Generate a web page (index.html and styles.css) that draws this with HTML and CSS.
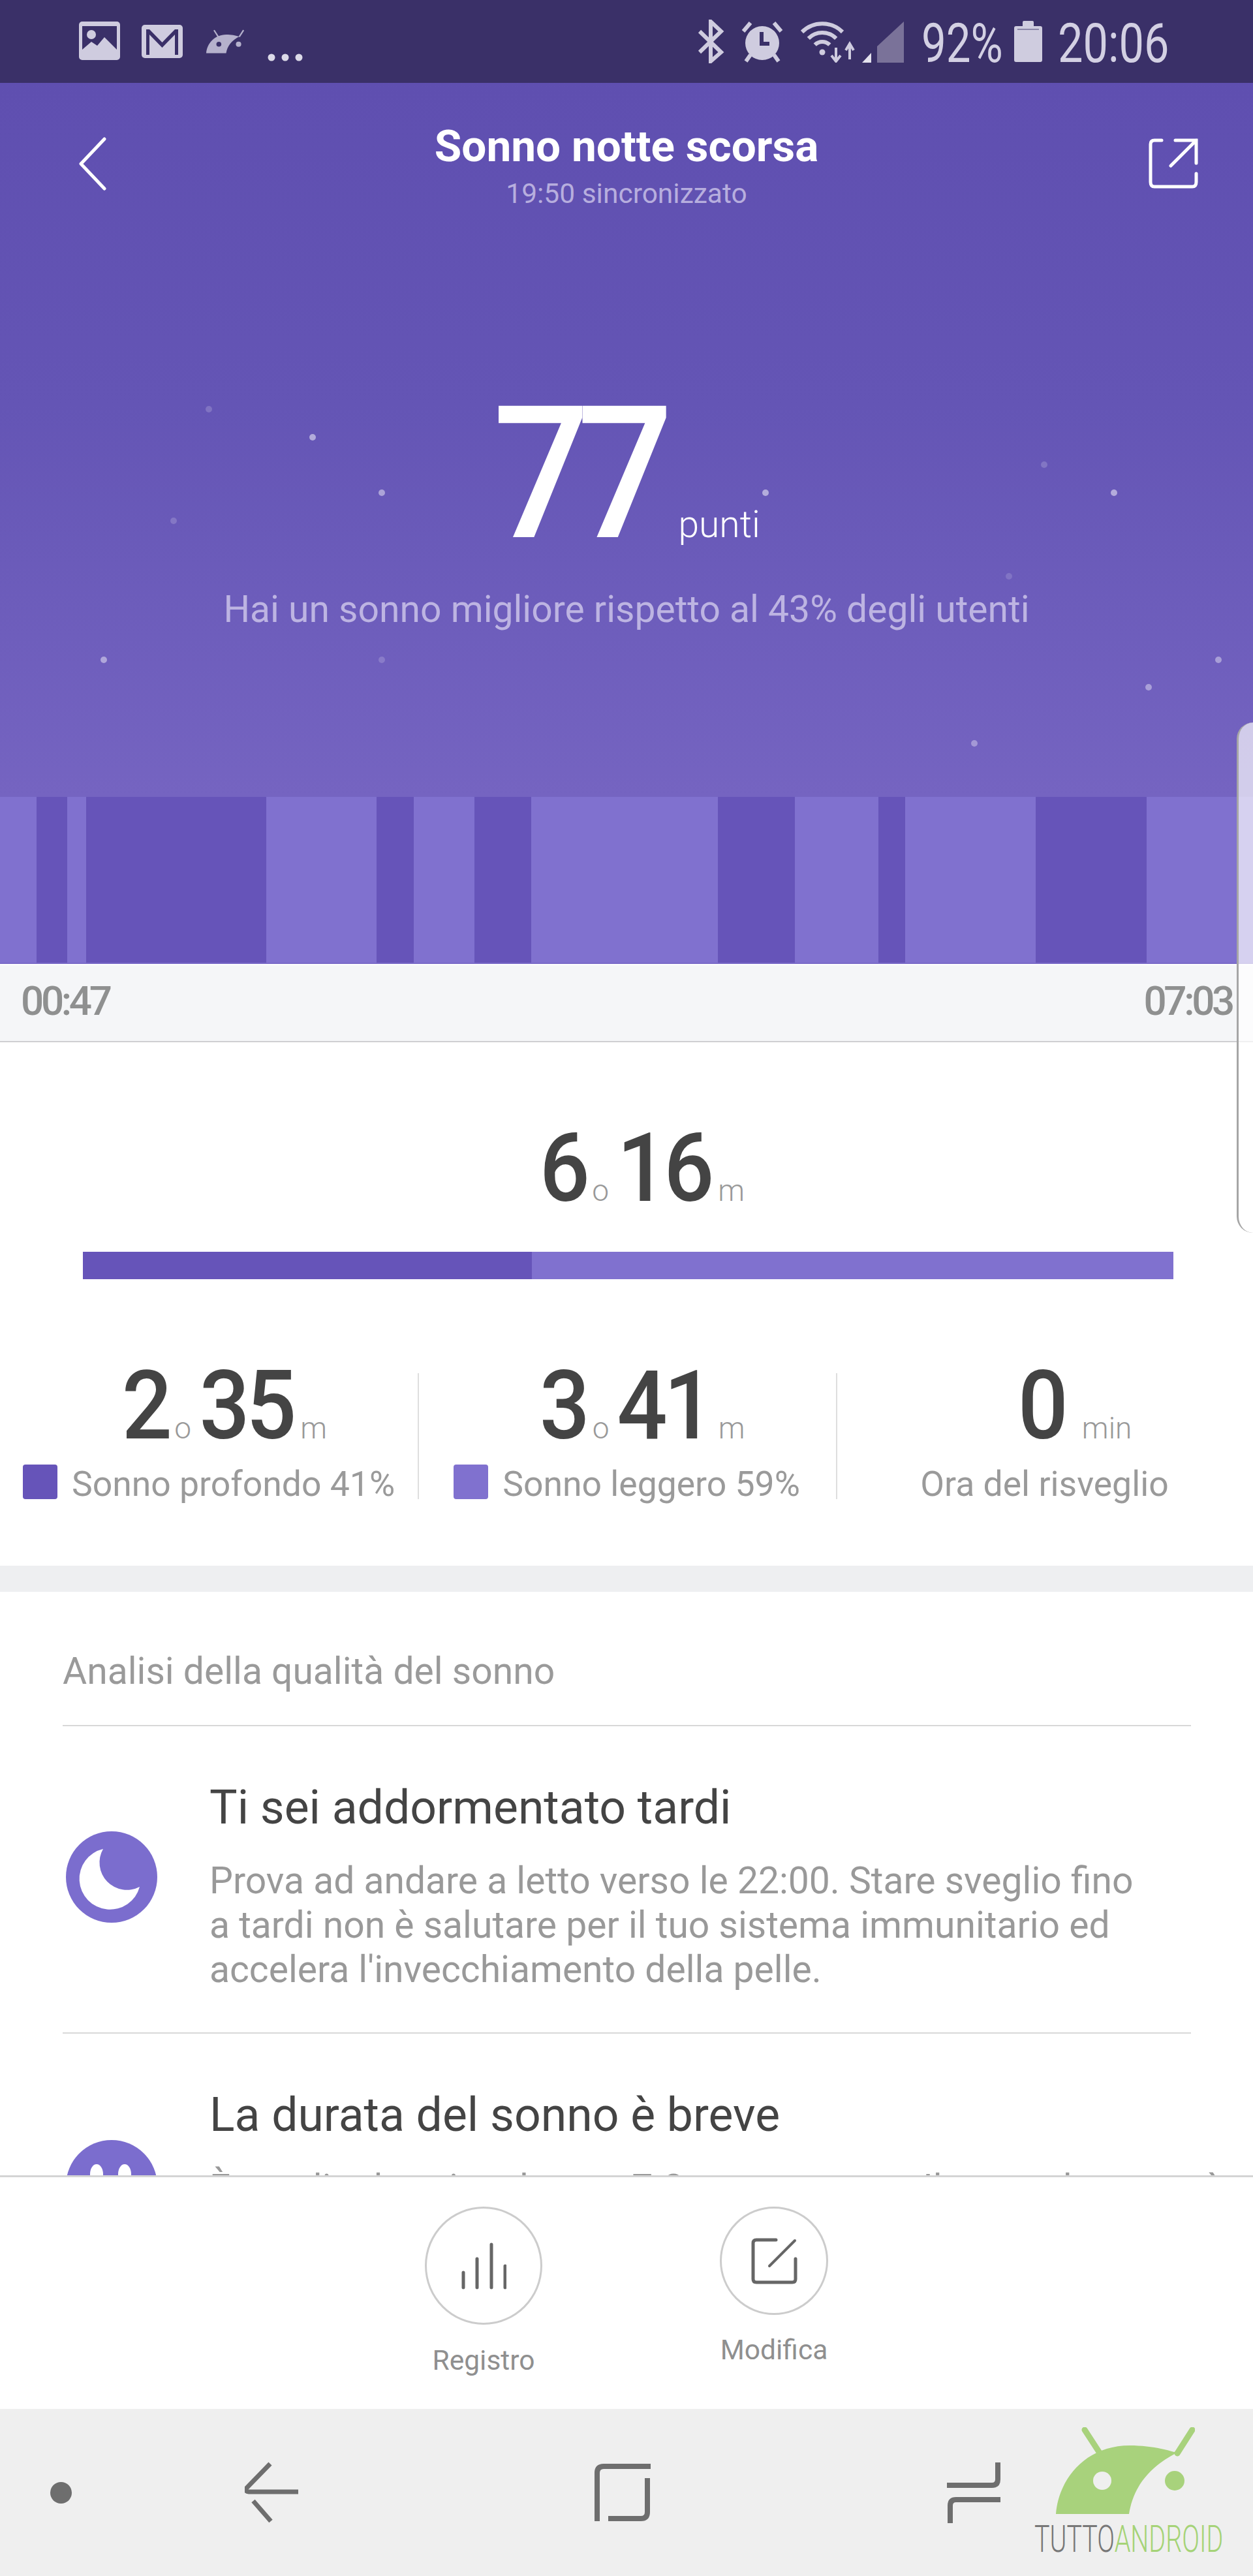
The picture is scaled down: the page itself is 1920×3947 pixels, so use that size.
FILE: index.html
```html
<!DOCTYPE html>
<html lang="it">
<head>
<meta charset="utf-8">
<title>Sonno notte scorsa</title>
<link rel="stylesheet" href="styles.css">
</head>
<body>
<div class="page">
  <div class="status">
    <div class="status-left">
      <svg class="si-image" width="63" height="59" viewBox="0 0 63 59"><rect width="63" height="59" rx="5" fill="#cfccdf"/><rect x="5" y="7" width="53" height="45" fill="#3a3068"/><ellipse cx="19" cy="20" rx="7" ry="7" fill="#cfccdf"/><path d="M5 43 19 31 28 37 39 24 58 43V54H5Z" fill="#cfccdf"/></svg>
      <svg class="si-mail" width="63" height="51" viewBox="0 0 63 51"><rect width="63" height="51" rx="5" fill="#cfccdf"/><path d="M7 7H12L31.500 27 51 7H56V46H51V15L31.500 35 12 15V46H7Z" fill="#3a3068"/></svg>
      <svg class="si-droid" width="58" height="37" viewBox="0 0 213 133"><path d="M0 133C4 80 45 28 113 28 140 28 165 33 181 38L192 36C140 60 118 95 112 133Z" fill="#b5b1cc"/><path d="M44 3 70 44M210 3 186 40" stroke="#b5b1cc" stroke-width="8" fill="none"/><circle cx="71" cy="82" r="14" fill="#3a3068"/><circle cx="182" cy="82" r="15" fill="#b5b1cc"/></svg>
      <svg class="si-dots" width="54" height="12" viewBox="0 0 54 12"><circle cx="6" cy="6" r="5.500" fill="#dcdae8"/><circle cx="27" cy="6" r="5.500" fill="#dcdae8"/><circle cx="48" cy="6" r="5.500" fill="#dcdae8"/></svg>
    </div>
    <div class="status-right">
      <svg class="si-bt" width="42" height="67" viewBox="0 0 42 67"><path d="M4 18 37 50 21 64V3L37 18 4 50" fill="none" stroke="#cfccdf" stroke-width="6"/></svg>
      <svg class="si-alarm" width="64" height="64" viewBox="0 0 64 64"><circle cx="32" cy="34" r="26" fill="#cfccdf"/><path d="M31 17V35H43" fill="none" stroke="#3a3068" stroke-width="6"/><path d="M3 16 14 3M61 16 50 3M7 62 14 52M57 62 50 52" stroke="#cfccdf" stroke-width="6" fill="none"/></svg>
      <svg class="si-wifi" width="88" height="65" viewBox="0 0 88 65"><g fill="none" stroke="#cfccdf" stroke-width="6"><path d="M5 18A44 44 0 0 1 67 18"/><path d="M14.800 27.800A30 30 0 0 1 57.200 27.800"/><path d="M24.700 37.700A16 16 0 0 1 47.300 37.700"/></g><circle cx="36" cy="49" r="4.500" fill="#cfccdf"/><path d="M57 42V62M50 54 57 63 64 54M78 60V38M72 46 78 36 84 46" fill="none" stroke="#cfccdf" stroke-width="4"/></svg>
      <svg class="si-signal" width="64" height="63" viewBox="0 0 64 63"><path d="M23 63V38L64 0V63Z" fill="#7a7299"/><path d="M0 63H14V48Z" fill="#e4e2ee"/></svg>
      <span class="stext pct">92%</span>
      <svg class="si-batt" width="43" height="63" viewBox="0 0 43 63"><path d="M3 8H13V2Q13 0 15 0H28Q30 0 30 2V8H40Q43 8 43 11V60Q43 63 40 63H3Q0 63 0 60V11Q0 8 3 8Z" fill="#cfccdf"/><rect x="5" y="12" width="33" height="2" fill="#8a85a8"/></svg>
      <span class="stext clock">20:06</span>
    </div>
  </div>

  <section class="hero">
    <svg class="stars" width="1920" height="1094" viewBox="0 127 1920 1094">
      <g fill="#fff">
        <circle cx="320" cy="627" r="5" opacity=".18"/><circle cx="479" cy="670" r="5" opacity=".5"/><circle cx="585" cy="755" r="5" opacity=".45"/><circle cx="266" cy="798" r="5" opacity=".18"/><circle cx="1173" cy="755" r="5" opacity=".5"/><circle cx="1600" cy="712" r="5" opacity=".18"/><circle cx="1707" cy="755" r="5" opacity=".5"/><circle cx="1546" cy="883" r="5" opacity=".15"/><circle cx="159" cy="1011" r="5" opacity=".45"/><circle cx="585" cy="1011" r="5" opacity=".18"/><circle cx="1867" cy="1011" r="5" opacity=".4"/><circle cx="1760" cy="1053" r="5" opacity=".4"/><circle cx="1493" cy="1139" r="5" opacity=".35"/>
      </g>
    </svg>
    <header class="topbar">
      <div class="tb-side">
        <svg class="back" width="44" height="82" viewBox="0 0 44 82"><path d="M40 3 4 41 40 79" fill="none" stroke="#fff" stroke-width="5" stroke-linecap="round" stroke-linejoin="round"/></svg>
      </div>
      <div class="tb-title">
        <h1 class="title">Sonno notte scorsa</h1>
        <p class="sync">19:50 sincronizzato</p>
      </div>
      <div class="tb-side tb-right">
        <svg class="share" width="76" height="77" viewBox="0 0 76 77"><path d="M20 3H9Q3 3 3 9V67Q3 74 9 74H67Q73 74 73 67V54" fill="none" stroke="#fff" stroke-width="5" stroke-linecap="round"/><path d="M41 3H73V38M73 3 34 42" fill="none" stroke="#fff" stroke-width="5" stroke-linecap="round"/></svg>
      </div>
    </header>
    <div class="score"><span class="score-num">77</span><span class="score-unit">punti</span></div>
    <p class="score-note">Hai un sonno migliore rispetto al 43% degli utenti</p>
  </section>

  <div class="chart">
    <i class="seg l" style="width:56px"></i><i class="seg d" style="width:47px"></i><i class="seg l" style="width:29px"></i><i class="seg d" style="width:276px"></i><i class="seg l" style="width:169px"></i><i class="seg d" style="width:57px"></i><i class="seg l" style="width:93px"></i><i class="seg d" style="width:87px"></i><i class="seg l" style="width:286px"></i><i class="seg d" style="width:118px"></i><i class="seg l" style="width:128px"></i><i class="seg d" style="width:41px"></i><i class="seg l" style="width:200px"></i><i class="seg d" style="width:170px"></i><i class="seg l" style="width:163px"></i>
  </div>
  <div class="times"><span>00:47</span><span>07:03</span></div>

  <section class="summary">
    <div class="num total"><b>6</b><small>o</small><b>16</b><small>m</small></div>
    <div class="ratio"><i class="ratio-deep" style="width:688px"></i><i class="ratio-light"></i></div>
    <div class="stats">
      <div class="stat">
        <div class="num"><b>2</b><small>o</small><b>35</b><small>m</small></div>
        <div class="stat-label"><i class="swatch deep"></i><span>Sonno profondo 41%</span></div>
      </div>
      <div class="stat stat-div">
        <div class="num"><b>3</b><small>o</small><b>41</b><small>m</small></div>
        <div class="stat-label"><i class="swatch light"></i><span>Sonno leggero 59%</span></div>
      </div>
      <div class="stat stat-div">
        <div class="num num-wake"><b>0</b><small class="min">min</small></div>
        <div class="stat-label"><span>Ora del risveglio</span></div>
      </div>
    </div>
  </section>

  <div class="band"></div>

  <section class="analysis">
    <h2 class="an-head">Analisi della qualità del sonno</h2>
    <article class="item">
      <svg class="item-icon" width="140" height="140" viewBox="0 0 140 140"><circle cx="70" cy="70" r="70" fill="#7b6dce"/><path d="M57 27A47 47 0 1 0 113 85A42 42 0 0 1 57 27Z" fill="#fff"/></svg>
      <div class="item-body">
        <h3 class="item-title">Ti sei addormentato tardi</h3>
        <p class="item-desc">Prova ad andare a letto verso le 22:00. Stare sveglio fino<br>a tardi non è salutare per il tuo sistema immunitario ed<br>accelera l'invecchiamento della pelle.</p>
      </div>
    </article>
    <article class="item item-second">
      <svg class="item-icon" width="140" height="140" viewBox="0 0 140 140"><circle cx="70" cy="70" r="70" fill="#7b6dce"/><ellipse cx="47" cy="52" rx="10" ry="15" fill="#fff"/><ellipse cx="90" cy="52" rx="10" ry="15" fill="#fff"/></svg>
      <div class="item-body">
        <h3 class="item-title">La durata del sonno è breve</h3>
        <p class="item-desc">È meglio dormire almeno 7-8 ore per notte. Il sonno breve può</p>
      </div>
    </article>
  </section>

  <div class="actions">
    <div class="action">
      <div class="ring ring-lg">
        <svg width="70" height="72" viewBox="0 0 70 72"><path d="M4 46V69M25 25V69M47 3V69M68 36V69" fill="none" stroke="#666" stroke-width="5" stroke-linecap="round"/></svg>
      </div>
      <span class="action-label label-lg">Registro</span>
    </div>
    <div class="action">
      <div class="ring ring-sm">
        <svg width="71" height="71" viewBox="0 0 71 71"><path d="M38 3H8Q3 3 3 8V63Q3 68 8 68H63Q68 68 68 63V32" fill="none" stroke="#666" stroke-width="5" stroke-linecap="round"/><path d="M67 4 28 43" fill="none" stroke="#666" stroke-width="4" stroke-linecap="round"/></svg>
      </div>
      <span class="action-label label-sm">Modifica</span>
    </div>
  </div>

  <nav class="nav">
    <i class="nav-dot"></i>
    <svg class="nav-back" width="84" height="94" viewBox="0 0 84 94"><path d="M39 3 3 40Q0 46 6 46H82" fill="none" stroke="#6e6e6e" stroke-width="7"/><path d="M13 60 40 91" fill="none" stroke="#6e6e6e" stroke-width="7"/></svg>
    <svg class="nav-recent" width="86" height="88" viewBox="0 0 86 88"><path d="M4 88V14Q4 4 14 4H86" fill="none" stroke="#6e6e6e" stroke-width="8"/><path d="M81 22V74Q81 84 71 84H21" fill="none" stroke="#6e6e6e" stroke-width="8"/></svg>
    <svg class="nav-switch" width="82" height="94" viewBox="0 0 82 94"><path d="M78 0V26Q78 35 69 35H0" fill="none" stroke="#6e6e6e" stroke-width="8"/><path d="M82 57H14Q5 57 5 66V93" fill="none" stroke="#6e6e6e" stroke-width="8"/></svg>
    <div class="logo">
      <svg class="logo-mark" width="213" height="133" viewBox="0 0 213 133"><path d="M0 133C4 80 45 28 113 28 140 28 165 33 181 38L192 36C140 60 118 95 112 133Z" fill="#a8d27c"/><path d="M44 4 70 44M209 4 186 40" stroke="#a8d27c" stroke-width="9" stroke-linecap="round" fill="none"/><circle cx="71" cy="82" r="14" fill="#efefef"/><circle cx="182" cy="82" r="15" fill="#a8d27c"/></svg>
      <div class="logo-text"><span class="logo-a">TUTTO</span><span class="logo-b">ANDROID</span></div>
    </div>
  </nav>

  <div class="edge"></div>
</div>
</body>
</html>
```
FILE: styles.css
```css
* { box-sizing: border-box; }
html, body { margin: 0; padding: 0; }
body { font-family: Roboto, "Liberation Sans", sans-serif; background: #fff; }
i { display: block; font-style: normal; }
h1, h2, h3, p { margin: 0; font-weight: 400; }

.page {
  position: relative;
  width: 1920px;
  height: 3947px;
  overflow: hidden;
  display: flex;
  flex-direction: column;
}

/* status bar */
.status {
  flex: none;
  height: 127px;
  background: #3a3068;
  display: flex;
  justify-content: space-between;
  padding: 0 128px 0 121px;
}
.status-left { display: flex; align-items: flex-start; }
.si-image { margin-top: 33px; }
.si-mail { margin: 38px 0 0 33px; }
.si-droid { margin: 45px 0 0 36px; }
.si-dots { margin: 82px 0 0 36px; }
.status-right { display: flex; align-items: flex-start; }
.si-bt { margin-top: 30px; }
.si-alarm { margin: 32px 0 0 26px; }
.si-wifi { margin: 31px 0 0 24px; }
.si-signal { margin: 33px 0 0 9px; }
.si-batt { margin: 32px 0 0 17px; }
.stext {
  display: block;
  font-size: 84px;
  line-height: 98px;
  font-weight: 400;
  color: #d3d0e3;
  white-space: nowrap;
  transform: scaleX(.8);
  transform-origin: left top;
  margin-top: 18px;
}
.pct { width: 125px; margin-left: 27px; }
.clock { width: 171px; margin-left: 24px; transform: scaleX(.815); }

/* hero */
.hero {
  position: relative;
  flex: none;
  height: 1094px;
  background: linear-gradient(180deg, #5f4fb0 0%, #6455b5 45%, #7564c1 100%);
  color: #fff;
  text-align: center;
}
.stars { position: absolute; left: 0; top: 0; }
.topbar {
  position: relative;
  display: flex;
  justify-content: space-between;
  padding: 57px 84px 0;
}
.tb-side { width: 200px; display: flex; align-items: flex-start; }
.tb-right { justify-content: flex-end; }
.back { margin: 26px 0 0 36px; }
.share { margin-top: 28px; }
.title { font-size: 67.500px; line-height: 80px; font-weight: 700; }
.sync { font-size: 42.500px; line-height: 50px; margin-top: 8px; color: #b7aede; }

.score {
  position: relative;
  display: flex;
  justify-content: center;
  align-items: baseline;
  margin-top: 263px;
  padding-right: 22px;
}
.score-num {
  display: inline-block;
  font-size: 283px;
  line-height: 283px;
  font-weight: 500;
  letter-spacing: -.075em;
  transform: scaleX(.92);
  transform-origin: right center;
}
.score-unit { font-size: 57px; margin-left: 27px; font-weight: 300; }
.score-note {
  position: relative;
  font-size: 57px;
  line-height: 70px;
  margin-top: 31px;
  color: #bdb4e2;
  font-weight: 400;
}

/* chart */
.chart {
  flex: none;
  height: 256px;
  display: flex;
  border-bottom: 2px solid #7a6bc8;
}
.seg { height: 100%; }
.seg.l { background: #8071cf; }
.seg.d { background: #6654b9; }

.times {
  flex: none;
  height: 120px;
  background: #f5f6f8;
  border-top: 2px solid #fff;
  border-bottom: 2px solid #cfcfd2;
  padding: 0 32px 7px;
  display: flex;
  justify-content: space-between;
  align-items: center;
  font-size: 62px;
  font-weight: 500;
  letter-spacing: -.07em;
  color: #8f9090;
}

/* summary */
.summary { flex: none; padding: 121px 0 95px; background: #fff; }
.num {
  display: flex;
  justify-content: center;
  align-items: baseline;
  padding-left: 52px;
  color: #444;
}
.num b {
  display: inline-block;
  font-size: 146px;
  line-height: 146px;
  font-weight: 500;
  letter-spacing: -.04em;
  transform: scaleX(.93);
}
.num small {
  font-size: 46px;
  font-weight: 300;
  color: #999;
  margin: 0 7px 0 6px;
}
.num-wake { padding-left: 97px; }
.num small.min { margin-left: 24px; }
.ratio {
  display: flex;
  height: 42px;
  margin: 54px 122px 122px 127px;
}
.ratio-deep { background: #6654b9; }
.ratio-light { flex: 1; background: #8071cf; }
.stats { display: grid; grid-template-columns: 640px 641px 639px; }
.stat { position: relative; }
.stat-div::before {
  content: "";
  position: absolute;
  left: 0;
  top: 22px;
  bottom: 7px;
  width: 2px;
  background: #dedede;
}
.stat-label {
  display: flex;
  justify-content: center;
  align-items: flex-start;
  gap: 22px;
  margin-top: 16px;
  font-size: 53.500px;
  line-height: 60px;
  color: #9a9a9a;
}
.stat-label span { padding-top: 0; white-space: nowrap; }
.swatch { width: 53px; height: 53px; border-radius: 4px; }
.swatch.deep { background: #6654b9; }
.swatch.light { background: #8071cf; }

.band { flex: none; height: 40px; background: #eeeff1; }

/* analysis */
.analysis {
  flex: 1;
  min-height: 0;
  overflow: hidden;
  background: #fff;
  padding: 0 95px 0 96px;
}
.an-head {
  font-size: 57px;
  line-height: 70px;
  padding: 87px 0 47px;
  color: #9a9a9a;
  border-bottom: 2px solid #d8d8d8;
}
.item {
  display: flex;
  align-items: flex-start;
  padding: 85px 0 62px;
  border-bottom: 2px solid #d8d8d8;
}
.item-icon { flex: none; margin: 76px 80px 0 5px; }
.item-second .item-icon { margin-top: 78px; }
.item-title { font-size: 71.500px; line-height: 80px; color: #444; }
.item-desc { font-size: 57px; line-height: 68px; margin-top: 38px; color: #999; white-space: nowrap; }

/* actions */
.actions {
  flex: none;
  height: 358px;
  border-top: 3px solid #d4d4d4;
  background: #fff;
  padding-top: 45px;
  display: flex;
  justify-content: center;
  align-items: flex-start;
  gap: 272px;
}
.action { display: flex; flex-direction: column; align-items: center; }
.ring {
  border: 3px solid #ccc;
  border-radius: 50%;
  display: flex;
  align-items: center;
  justify-content: center;
}
.ring-lg { width: 180px; height: 181px; }
.ring-sm { width: 166px; height: 166px; }
.action-label { font-size: 42.500px; line-height: 52px; color: #8f8f8f; }
.label-lg { margin-top: 29px; }
.label-sm { margin-top: 28px; }

/* nav */
.nav {
  position: relative;
  flex: none;
  height: 256px;
  background: #efefef;
  display: flex;
  align-items: flex-start;
}
.nav-dot { width: 33px; height: 33px; border-radius: 50%; background: #6e6e6e; margin: 112px 0 0 77px; }
.nav-back { margin: 81px 0 0 265px; }
.nav-recent { margin: 84px 0 0 452px; }
.nav-switch { margin: 82px 0 0 454px; }
.logo { position: absolute; left: 1585px; top: 28px; width: 288px; }
.logo-mark { display: block; margin-left: 33px; }
.logo-text {
  width: 288px;
  margin-top: 9px;
  font-size: 58px;
  line-height: 58px;
  font-weight: 300;
  white-space: nowrap;
  transform: scaleX(.68);
  transform-origin: left top;
}
.logo-a { color: #777; }
.logo-b { color: #a5d377; }

/* edge panel handle */
.edge {
  position: absolute;
  right: 0;
  top: 1107px;
  width: 25px;
  height: 782px;
  background: rgba(255, 255, 255, .68);
  border-left: 3px solid #a6a6a6;
  border-radius: 30px 0 0 30px;
}
```
